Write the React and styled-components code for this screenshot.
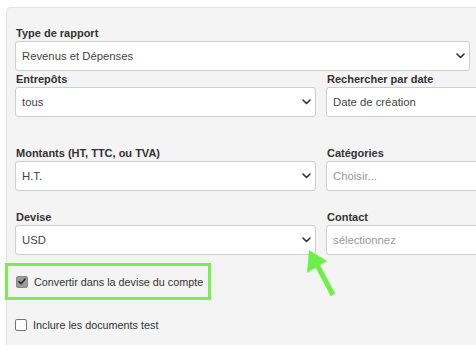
import React from 'react';
import styled, { createGlobalStyle } from 'styled-components';

const Global = createGlobalStyle`
  html, body { margin: 0; padding: 0; background: #ffffff; }
  body { font-family: "Liberation Sans", Arial, sans-serif; overflow: hidden; }
`;

const Page = styled.div`
  position: relative;
  width: 476px;
  height: 345px;
  overflow: hidden;
  padding: 7px 0 0 6px;
  box-sizing: border-box;
`;

const Panel = styled.div`
  width: 720px;
  min-height: 420px;
  background: #f4f4f4;
  border: 1px solid #e3e3e3;
  border-radius: 4px;
  padding: 18px 0 0 8px;
  box-sizing: border-box;
`;

const Row = styled.div`
  display: grid;
  grid-template-columns: ${(p) => (p.$wide ? '455px' : '301px 301px')};
  column-gap: 10px;
  margin-top: ${(p) => p.$mt || 0}px;
`;

const Field = styled.div`
  display: flex;
  flex-direction: column;
`;

const Label = styled.label`
  font-size: 11px;
  font-weight: bold;
  line-height: 14px;
  color: #333333;
  padding-left: 1px;
  margin-bottom: 1px;
`;

const Control = styled.div`
  position: relative;
  height: 30px;
  box-sizing: border-box;
  background: #ffffff;
  border: 1px solid #cfcfcf;
  border-radius: 3px;
  display: flex;
  align-items: center;
  padding: 0 6px;
  font-size: 11.3px;
  color: ${(p) => (p.$placeholder ? '#9a9a9a' : '#444444')};
`;

const Chevron = styled.svg`
  position: absolute;
  right: 4px;
  top: 50%;
  margin-top: -3px;
`;

const Select = ({ children }) => (
  <Control>
    {children}
    <Chevron width="9" height="6" viewBox="0 0 9 6">
      <path d="M1 1 L4.5 4.5 L8 1" fill="none" stroke="#333" strokeWidth="1.6" strokeLinecap="round" strokeLinejoin="round" />
    </Chevron>
  </Control>
);

const Highlight = styled.div`
  width: 206px;
  height: 37px;
  box-sizing: border-box;
  margin: 8px 0 0 -10px;
  border: 3px solid #74f04f;
  display: flex;
  align-items: center;
  padding-left: 8px;
`;

const CheckRow = styled.div`
  display: flex;
  align-items: center;
  gap: 6px;
  font-size: 10.8px;
  color: #333333;
  line-height: 14px;
  margin-top: ${(p) => p.$mt || 0}px;
`;

const Box = styled.span`
  width: 12px;
  height: 12px;
  box-sizing: border-box;
  border-radius: 2px;
  display: inline-flex;
  align-items: center;
  justify-content: center;
  background: ${(p) => (p.$checked ? '#9b9b9b' : '#ffffff')};
  border: 1px solid ${(p) => (p.$checked ? '#8a8a8a' : '#767676')};
`;

const Overlay = styled.svg`
  position: absolute;
  left: 0;
  top: 0;
  pointer-events: none;
`;

export default function App() {
  return (
    <>
      <Global />
      <Page>
        <Panel>
          <Row $wide>
            <Field>
              <Label>Type de rapport</Label>
              <Select>Revenus et Dépenses</Select>
            </Field>
          </Row>
          <Row $mt={1}>
            <Field>
              <Label>Entrepôts</Label>
              <Select>tous</Select>
            </Field>
            <Field>
              <Label>Rechercher par date</Label>
              <Control>Date de création</Control>
            </Field>
          </Row>
          <Row $mt={29}>
            <Field>
              <Label>Montants (HT, TTC, ou TVA)</Label>
              <Select>H.T.</Select>
            </Field>
            <Field>
              <Label>Catégories</Label>
              <Control $placeholder>Choisir...</Control>
            </Field>
          </Row>
          <Row $mt={19}>
            <Field>
              <Label>Devise</Label>
              <Select>USD</Select>
            </Field>
            <Field>
              <Label>Contact</Label>
              <Control $placeholder>sélectionnez</Control>
            </Field>
          </Row>
          <Highlight>
            <CheckRow>
              <Box $checked>
                <svg width="8" height="7" viewBox="0 0 8 7">
                  <path d="M1 3.6 L3 5.6 L7 1.2" fill="none" stroke="#2e2e2e" strokeWidth="1.6" strokeLinecap="round" strokeLinejoin="round" />
                </svg>
              </Box>
              Convertir dans la devise du compte
            </CheckRow>
          </Highlight>
          <CheckRow $mt={18}>
            <Box />
            Inclure les documents test
          </CheckRow>
        </Panel>
        <Overlay width="476" height="345" viewBox="0 0 476 345">
          <line x1="316" y1="263" x2="333" y2="295" stroke="#6ef04b" strokeWidth="5" />
          <polygon points="309,250 307,273 327,261" fill="#6ef04b" />
        </Overlay>
      </Page>
    </>
  );
}
